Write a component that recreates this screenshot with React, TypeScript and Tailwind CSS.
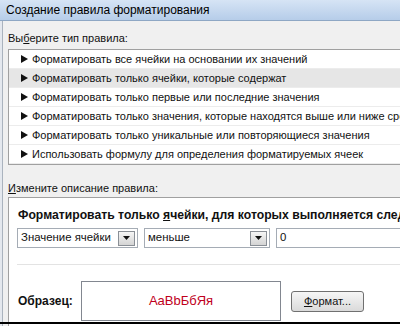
import React from "react";

const RULES = [
  "Форматировать все ячейки на основании их значений",
  "Форматировать только ячейки, которые содержат",
  "Форматировать только первые или последние значения",
  "Форматировать только значения, которые находятся выше или ниже среднего",
  "Форматировать только уникальные или повторяющиеся значения",
  "Использовать формулу для определения форматируемых ячеек",
];

function Arrow() {
  return (
    <svg width="7" height="8" viewBox="0 0 7 8" className="shrink-0">
      <path d="M0 0 L7 4 L0 8 Z" fill="#111" />
    </svg>
  );
}

interface ComboProps {
  value: string;
  width: string;
}

function Combo({ value, width }: ComboProps) {
  return (
    <div className={`flex h-[20px] items-center border border-[#a5acb5] bg-white ${width}`}>
      <span className="flex-1 truncate pl-[3px] text-[11.4px]">{value}</span>
      <div className="mr-[2px] flex h-[15px] w-[17px] items-center justify-center border border-[#8a8f96] bg-gradient-to-b from-[#f6f6f6] to-[#d4d4d4]">
        <svg width="7" height="4" viewBox="0 0 7 4">
          <path d="M0 0 H7 L3.5 4 Z" fill="#111" />
        </svg>
      </div>
    </div>
  );
}

export default function App() {
  return (
    <div className="relative h-[326px] w-[400px] overflow-hidden bg-[#f0f0f0] font-['Liberation_Sans',sans-serif] text-[11px] text-[#111]">
      <div className="flex h-[21px] items-center border-b border-[#8ea7c4] bg-gradient-to-b from-[#d6e4f5] to-[#b6cde9] pb-[1px] pl-[6px] text-[12px] text-black">
        Создание правила форматирования
      </div>

      <div className="flex">
        <div className="w-[2px] shrink-0 bg-[#e4e8ee]" />
        <div className="w-[1px] shrink-0 bg-[#aab3be]" />
        <div className="pl-[5px]">
          <div className="pt-[9px] leading-[16px]">
            Вы<span className="underline">б</span>ерите тип правила:
          </div>

          <div className="mt-[3px] w-[420px] border border-[#a0a0a0] bg-white">
            {RULES.map((rule, i) => (
              <div
                key={rule}
                className={`flex h-[19px] items-center gap-[4px] whitespace-nowrap border-b border-[#ececec] pl-[12px] text-[11px] ${
                  i === 1 ? "bg-[#e6e6e6]" : ""
                }`}
              >
                <Arrow />
                <span>{rule}</span>
              </div>
            ))}
          </div>

          <div className="pt-[15px] leading-[16px]">
            <span className="underline">И</span>змените описание правила:
          </div>

          <div className="mt-[1px] h-[140px] w-[420px] border border-[#a0a0a0] bg-white pl-[8px]">
            <div className="ml-[1px] whitespace-nowrap pt-[9px] text-[12.2px] font-bold leading-[16px]">
              Форматировать только <span className="underline">я</span>чейки, для которых выполняется следующее условие:
            </div>
            <div className="mt-[5px] flex gap-[6px]">
              <Combo value="Значение ячейки" width="w-[121px]" />
              <Combo value="меньше" width="w-[126px]" />
              <div className="flex h-[20px] w-[140px] items-center border border-[#a5acb5] bg-white pl-[3px] text-[11.4px]">0</div>
            </div>
            <div className="mt-[16px] border-t border-[#e3e3e3]" />
            <div className="flex items-center pt-[16px]">
              <div className="ml-[1px] w-[63px] text-[12px] font-bold">Образец:</div>
              <div className="flex h-[40px] w-[200px] items-center justify-center border border-[#828790] text-[13px] text-[#c0001c]">
                AaBbБбЯя
              </div>
              <button className="ml-[10px] h-[21px] w-[73px] rounded-[3px] border border-[#707070] bg-gradient-to-b from-[#f6f6f6] to-[#dadada] text-[11px]">
                <span className="underline">Ф</span>ормат...
              </button>
            </div>
          </div>
        </div>
      </div>
      <div className="absolute bottom-[2px] left-0 h-[2px] w-full bg-black" />
    </div>
  );
}
